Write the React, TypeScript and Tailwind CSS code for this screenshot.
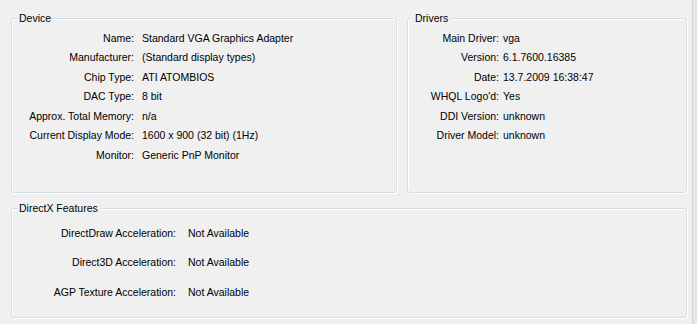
import type { ReactNode } from "react";

type Pair = [string, string];

const device: Pair[] = [
  ["Name:", "Standard VGA Graphics Adapter"],
  ["Manufacturer:", "(Standard display types)"],
  ["Chip Type:", "ATI ATOMBIOS"],
  ["DAC Type:", "8 bit"],
  ["Approx. Total Memory:", "n/a"],
  ["Current Display Mode:", "1600 x 900 (32 bit) (1Hz)"],
  ["Monitor:", "Generic PnP Monitor"],
];

const drivers: Pair[] = [
  ["Main Driver:", "vga"],
  ["Version:", "6.1.7600.16385"],
  ["Date:", "13.7.2009 16:38:47"],
  ["WHQL Logo'd:", "Yes"],
  ["DDI Version:", "unknown"],
  ["Driver Model:", "unknown"],
];

const directx: Pair[] = [
  ["DirectDraw Acceleration:", "Not Available"],
  ["Direct3D Acceleration:", "Not Available"],
  ["AGP Texture Acceleration:", "Not Available"],
];

const Group = ({ title, className, children }: { title: string; className: string; children: ReactNode }) => (
  <fieldset
    className={`m-0 min-w-0 rounded-[3px] border border-[#d5dfe5] p-0 pt-[3.5px] shadow-[inset_1px_1px_0_#fff,1px_1px_0_#fff] ${className}`}
  >
    <legend className="ml-[5px] bg-[#f0f0f0] px-[2px] leading-[13px]">{title}</legend>
    {children}
  </fieldset>
);

const Rows = ({ rows, labelW, gap, rowH }: { rows: Pair[]; labelW: string; gap: string; rowH: string }) => (
  <div className="flex flex-col">
    {rows.map(([label, value]) => (
      <div key={label} className={`flex whitespace-nowrap ${rowH}`}>
        <span className={`shrink-0 text-right ${labelW}`}>{label}</span>
        <span className={gap}>{value}</span>
      </div>
    ))}
  </div>
);

export default function App() {
  return (
    <div className="flex h-[324px] w-[697px] overflow-hidden bg-[#f0f0f0] font-['Liberation_Sans',Arial,sans-serif] text-[10.5px] text-black">
      <div className="flex flex-1 flex-col gap-[9px] pl-[11px] pr-[5px] pt-[12px]">
        <div className="flex gap-[10px]">
          <Group title="Device" className="h-[181px] w-[386px]">
            <Rows rows={device} labelW="w-[122px]" gap="pl-[8px]" rowH="h-[19.5px] leading-[19.5px]" />
          </Group>
          <Group title="Drivers" className="h-[181px] w-[280px]">
            <Rows rows={drivers} labelW="w-[91px]" gap="pl-[4px]" rowH="h-[19.5px] leading-[19.5px]" />
          </Group>
        </div>
        <Group title="DirectX Features" className="h-[116px] w-[676px]">
          <Rows rows={directx} labelW="w-[164px]" gap="pl-[12px]" rowH="h-[29.5px] leading-[29.5px]" />
        </Group>
      </div>
      <div className="w-[5px] border-l border-[#d6d6d6] bg-[#e6e6e6]" />
    </div>
  );
}
